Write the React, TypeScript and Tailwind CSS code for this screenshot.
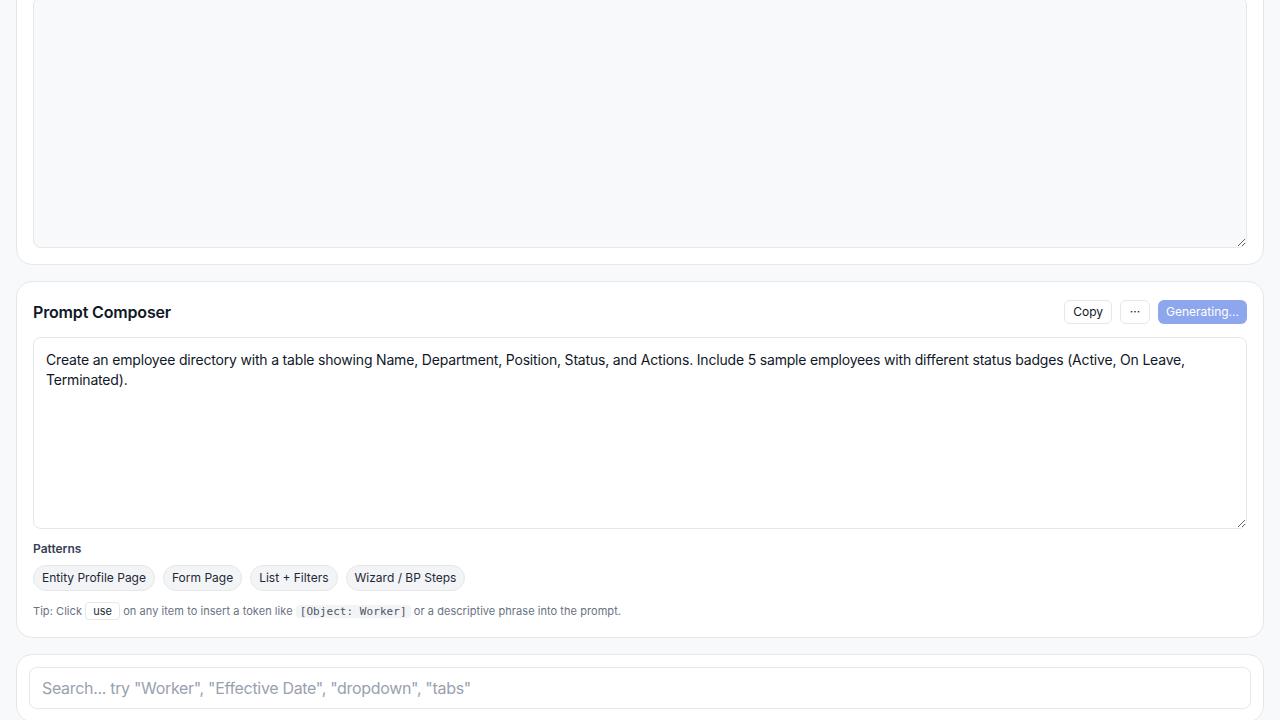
import React, { useState } from 'react';

const patterns = ['Entity Profile Page', 'Form Page', 'List + Filters', 'Wizard / BP Steps'];

const App: React.FC = () => {
  const [prompt, setPrompt] = useState(
    'Create an employee directory with a table showing Name, Department, Position, Status, and Actions. Include 5 sample employees with different status badges (Active, On Leave, Terminated).'
  );
  const [query, setQuery] = useState('');

  return (
    <div
      className="min-h-screen bg-[#f8f9fb] text-gray-900"
      style={{ fontFamily: 'Inter, "Noto Sans", sans-serif' }}
    >
      <div className="px-4 -mt-[20px] pb-4 space-y-4">
        {/* preview card, scrolled off the top */}
        <div className="bg-white border border-gray-200 rounded-2xl p-4">
          <textarea
            readOnly
            className="block w-full h-[251px] bg-[#f8f9fb] border border-gray-200 rounded-lg outline-none"
          />
        </div>

        {/* prompt composer */}
        <div className="bg-white border border-gray-200 rounded-2xl px-4 pt-[18px] pb-[17px]">
          <div className="flex items-center justify-between mb-[13px]">
            <h2 className="text-[16px] font-semibold text-gray-900 tracking-[-0.01em]">Prompt Composer</h2>
            <div className="flex items-center gap-2">
              <button className="h-6 px-2 text-xs border border-gray-200 rounded-md bg-white text-gray-900">
                Copy
              </button>
              <button className="h-6 w-[30px] text-xs border border-gray-200 rounded-md bg-white text-gray-900">
                ···
              </button>
              <button
                disabled
                className="h-6 px-2 text-xs rounded-md bg-[#8ea6ee] text-white"
              >
                Generating...
              </button>
            </div>
          </div>
          <textarea
            value={prompt}
            onChange={(e) => setPrompt(e.target.value)}
            className="block w-full h-[192px] px-3 py-3 text-sm leading-5 tracking-[-0.013em] border border-gray-200 rounded-lg outline-none resize-y text-gray-900"
          />
          <div className="mt-3 text-xs font-semibold text-gray-700">Patterns</div>
          <div className="flex flex-wrap gap-2 mt-2">
            {patterns.map((p) => (
              <button
                key={p}
                className="h-[26px] px-2 text-xs rounded-full bg-gray-100 border border-gray-200 text-gray-800"
              >
                {p}
              </button>
            ))}
          </div>
          <p className="mt-[11px] text-[11px] text-gray-500 leading-4 tracking-[0.005em]">
            Tip: Click{' '}
            <span className="inline-block px-[7px] border border-gray-200 rounded text-gray-800 bg-white">use</span>{' '}
            on any item to insert a token like{' '}
            <code
              className="px-1 rounded bg-gray-100 text-gray-600"
              style={{ fontFamily: '"DejaVu Sans Mono", "Liberation Mono", monospace' }}
            >
              [Object: Worker]
            </code>{' '}
            or a descriptive phrase into the prompt.
          </p>
        </div>

        {/* search */}
        <div className="bg-white border border-gray-200 rounded-2xl p-3">
          <input
            value={query}
            onChange={(e) => setQuery(e.target.value)}
            placeholder={'Search... try "Worker", "Effective Date", "dropdown", "tabs"'}
            className="block w-full h-[42px] px-3 text-base tracking-[-0.02em] border border-gray-200 rounded-lg outline-none placeholder:text-gray-400"
          />
        </div>
      </div>
    </div>
  );
};

export default App;
